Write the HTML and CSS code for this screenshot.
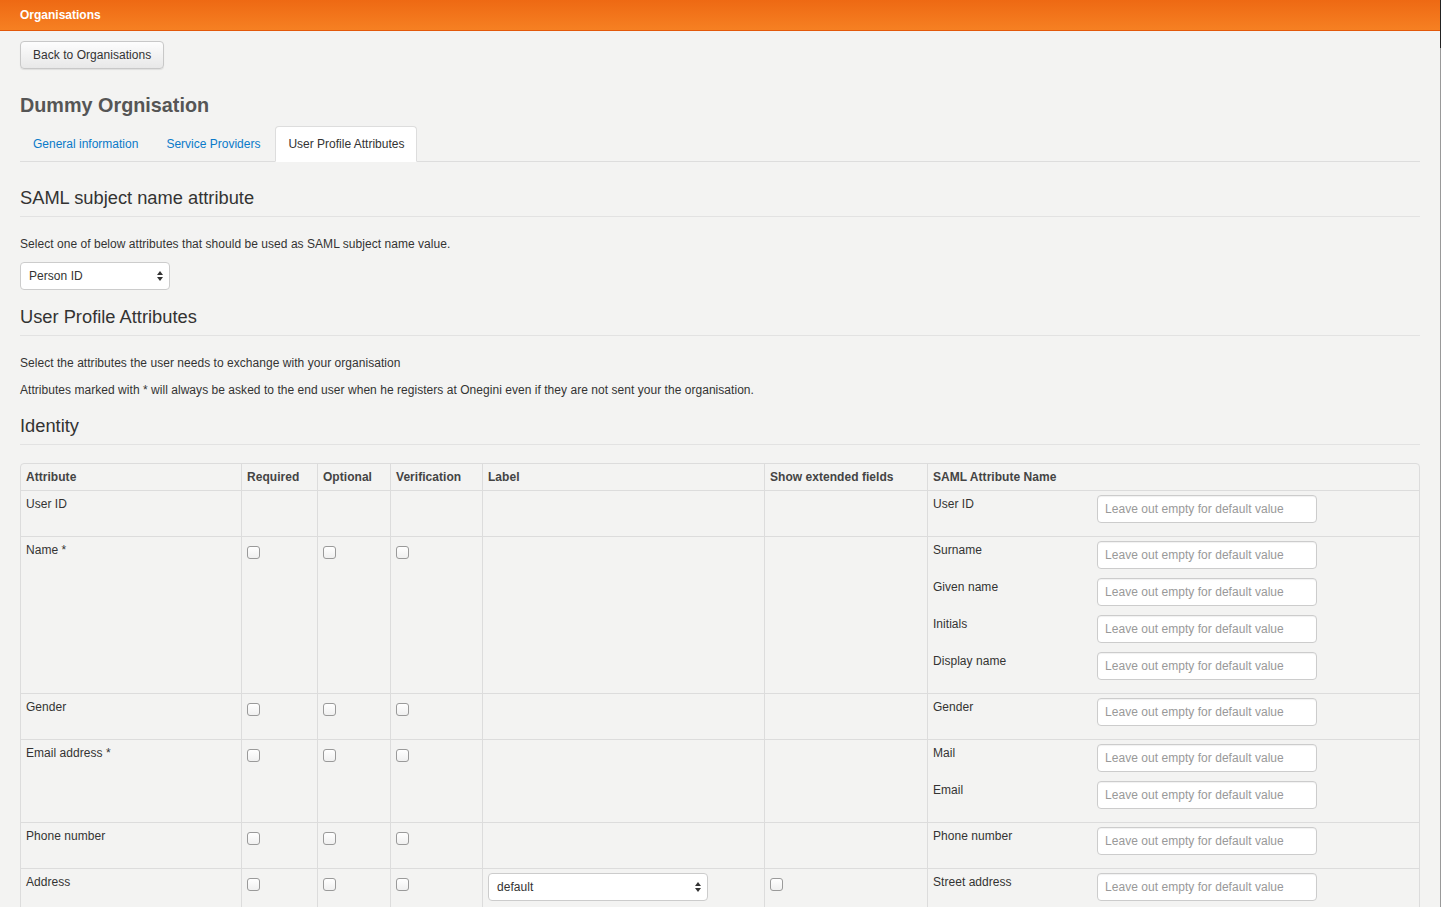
FILE: index.html
```html
<!DOCTYPE html>
<html>
<head>
<meta charset="utf-8">
<link rel="stylesheet" href="styles.css">
</head>
<body>
<div class="topbar"><span class="brand">Organisations</span></div>
<div class="edge"></div>
<main class="page">
  <div><button class="btn">Back to Organisations</button></div>
  <h1 class="org-title">Dummy Orgnisation</h1>
  <ul class="tabs">
    <li class="tab"><a>General information</a></li>
    <li class="tab"><a>Service Providers</a></li>
    <li class="tab active"><a>User Profile Attributes</a></li>
  </ul>

  <h2 class="section">SAML subject name attribute</h2>
  <p class="txt">Select one of below attributes that should be used as SAML subject name value.</p>
  <div class="select sel-person">
    <span>Person ID</span>
    <svg class="arrows" width="6" height="10" viewBox="0 0 6 10"><path d="M3 0L6 4H0z M3 10L0 6H6z" fill="#333"/></svg>
  </div>

  <h2 class="section s2">User Profile Attributes</h2>
  <p class="txt t2">Select the attributes the user needs to exchange with your organisation</p>
  <p class="txt t3">Attributes marked with * will always be asked to the end user when he registers at Onegini even if they are not sent your the organisation.</p>

  <h2 class="section s3">Identity</h2>

  <table class="grid">
    <colgroup>
      <col class="c1"><col class="c2"><col class="c3"><col class="c4"><col class="c5"><col class="c6"><col class="c7">
    </colgroup>
    <thead>
      <tr><th>Attribute</th><th>Required</th><th>Optional</th><th>Verification</th><th>Label</th><th>Show extended fields</th><th>SAML Attribute Name</th></tr>
    </thead>
    <tbody>
      <tr>
        <td>User ID</td><td></td><td></td><td></td><td></td><td></td>
        <td><div class="saml"><div class="entry"><span>User ID</span><input placeholder="Leave out empty for default value"></div></div></td>
      </tr>
      <tr>
        <td>Name *</td><td><input type="checkbox" class="cb"></td><td><input type="checkbox" class="cb"></td><td><input type="checkbox" class="cb"></td><td></td><td></td>
        <td><div class="saml">
          <div class="entry"><span>Surname</span><input placeholder="Leave out empty for default value"></div>
          <div class="entry"><span>Given name</span><input placeholder="Leave out empty for default value"></div>
          <div class="entry"><span>Initials</span><input placeholder="Leave out empty for default value"></div>
          <div class="entry"><span>Display name</span><input placeholder="Leave out empty for default value"></div>
        </div></td>
      </tr>
      <tr>
        <td>Gender</td><td><input type="checkbox" class="cb"></td><td><input type="checkbox" class="cb"></td><td><input type="checkbox" class="cb"></td><td></td><td></td>
        <td><div class="saml"><div class="entry"><span>Gender</span><input placeholder="Leave out empty for default value"></div></div></td>
      </tr>
      <tr>
        <td>Email address *</td><td><input type="checkbox" class="cb"></td><td><input type="checkbox" class="cb"></td><td><input type="checkbox" class="cb"></td><td></td><td></td>
        <td><div class="saml">
          <div class="entry"><span>Mail</span><input placeholder="Leave out empty for default value"></div>
          <div class="entry"><span>Email</span><input placeholder="Leave out empty for default value"></div>
        </div></td>
      </tr>
      <tr>
        <td>Phone number</td><td><input type="checkbox" class="cb"></td><td><input type="checkbox" class="cb"></td><td><input type="checkbox" class="cb"></td><td></td><td></td>
        <td><div class="saml"><div class="entry"><span>Phone number</span><input placeholder="Leave out empty for default value"></div></div></td>
      </tr>
      <tr>
        <td>Address</td><td><input type="checkbox" class="cb"></td><td><input type="checkbox" class="cb"></td><td><input type="checkbox" class="cb"></td>
        <td><div class="select sel-label"><span>default</span><svg class="arrows" width="6" height="10" viewBox="0 0 6 10"><path d="M3 0L6 4H0z M3 10L0 6H6z" fill="#333"/></svg></div></td>
        <td><input type="checkbox" class="cb"></td>
        <td><div class="saml"><div class="entry"><span>Street address</span><input placeholder="Leave out empty for default value"></div></div></td>
      </tr>
    </tbody>
  </table>
</main>
</body>
</html>
```

FILE: styles.css
```css
* { box-sizing: border-box; }
html, body { margin: 0; padding: 0; }
body {
  background: #f3f3f2;
  font-family: "Liberation Sans", Arial, sans-serif;
  font-size: 12px;
  letter-spacing: 0.04px;
  color: #333;
  height: 907px;
  overflow: hidden;
}
.topbar {
  height: 31px;
  background: linear-gradient(#ee6913, #f68022);
  border-bottom: 1px solid #e2580a;
  padding: 0 20px;
  display: flex;
  align-items: center;
}
.brand {
  color: #fff;
  font-weight: bold;
  font-size: 12px;
  letter-spacing: 0;
  margin-top: -1px;
}
.edge {
  position: fixed;
  top: 0; right: 0;
  width: 1px; height: 907px;
  background: linear-gradient(#222 0, #222 48px, #999 48px);
}
.page { padding: 10px 21px 0 20px; }
.btn {
  font-family: inherit;
  font-size: 12px;
  letter-spacing: 0.04px;
  color: #333;
  height: 28px;
  padding: 0 12px;
  border: 1px solid #c8c8c8;
  border-radius: 4px;
  background: linear-gradient(#fdfdfd, #e8e8e8);
  box-shadow: 0 1px 1px rgba(0,0,0,0.08);
}
.org-title {
  font-size: 19.8px;
  font-weight: bold;
  color: #555;
  margin: 24px 0 0;
  line-height: 24px;
  letter-spacing: 0;
}
.tabs {
  list-style: none;
  margin: 9px 0 0;
  padding: 0;
  display: flex;
  border-bottom: 1px solid #ddd;
  height: 36px;
}
.tab { margin-right: 2px; }
.tab a {
  display: block;
  padding: 8px 12px;
  line-height: 18px;
  font-size: 12px;
  letter-spacing: 0;
  color: #0a7ac9;
  border: 1px solid transparent;
  border-radius: 4px 4px 0 0;
}
.tab.active a {
  color: #333;
  background: #fff;
  border-color: #ddd #ddd transparent;
  height: 36px;
}
.section {
  font-size: 18.3px;
  font-weight: normal;
  color: #333;
  margin: 25px 0 0;
  line-height: 20px;
  padding-top: 1px;
  padding-bottom: 8px;
  border-bottom: 1px solid #e2e2e2;
  letter-spacing: 0;
}
.txt { margin: 0; line-height: 18px; color: #333; padding-top: 1px; height: 18px; }
.section + .txt { margin-top: 17px; }
.select {
  background: #fff;
  border: 1px solid #ccc;
  border-radius: 4px;
  height: 28px;
  display: flex;
  align-items: center;
  justify-content: space-between;
  padding: 0 6px 0 8px;
  font-size: 12px;
  color: #333;
}
.sel-person { width: 150px; margin-top: 10px; }
.s2 { margin-top: 16px; }
.t2 { margin-top: 17px; }
.t3 { margin-top: 9px; }
.s3 { margin-top: 17px; }
.grid {
  margin-top: 18px;
  width: 1400px;
  table-layout: fixed;
  border-collapse: separate;
  border-spacing: 0;
  border: 1px solid #dcdcdc;
  border-radius: 4px;
}
.c1 { width: 220px; } .c2 { width: 76px; } .c3 { width: 73px; } .c4 { width: 92px; }
.c5 { width: 282px; } .c6 { width: 163px; } .c7 { width: auto; }
.grid th, .grid td {
  text-align: left;
  vertical-align: top;
  padding: 4px 5px 4px 5px;
  line-height: 18px;
  border-left: 1px solid #dcdcdc;
  border-top: 1px solid #dcdcdc;
}
.grid th:first-child, .grid td:first-child { border-left: 0; }
.grid thead th { border-top: 0; font-weight: bold; color: #444; }
.cb {
  -webkit-appearance: none;
  appearance: none;
  display: block;
  width: 13px; height: 13px;
  margin: 5px 0 0 0;
  border: 1px solid #9a9a9a;
  border-radius: 3px;
  background: linear-gradient(#fff, #f0f0f0);
}
.sel-label { width: 220px; }
.saml { display: flex; flex-direction: column; gap: 9px; padding-bottom: 9px; }
.entry { display: flex; align-items: flex-start; }
.entry span { width: 164px; }
.entry input {
  width: 220px; height: 28px;
  border: 1px solid #ccc;
  border-radius: 4px;
  background: #fff;
  padding: 0 7px;
  font-family: inherit;
  font-size: 12px;
  letter-spacing: 0.04px;
  box-shadow: inset 0 1px 1px rgba(0,0,0,0.06);
}
.entry input::placeholder { color: #999; }
```
